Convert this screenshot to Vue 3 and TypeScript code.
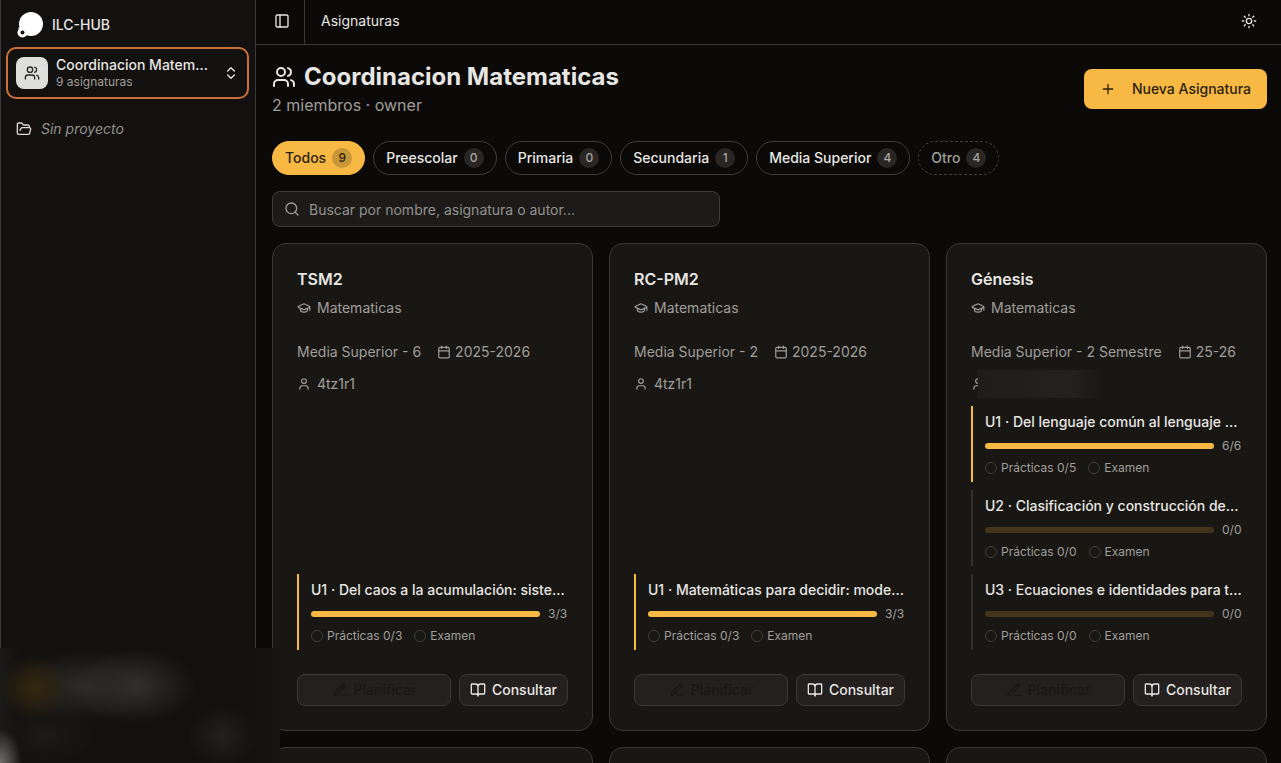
<script setup lang="ts">
import { ref } from 'vue'

interface Filter {
  label: string
  count: number
  dashed?: boolean
}
interface Unit {
  title: string
  done: number
  total: number
  practices: string
}
interface Subject {
  name: string
  area: string
  level: string
  period: string
  author: string
  units: Unit[]
}

const active = ref('Todos')
const query = ref('')

const filters: Filter[] = [
  { label: 'Todos', count: 9 },
  { label: 'Preescolar', count: 0 },
  { label: 'Primaria', count: 0 },
  { label: 'Secundaria', count: 1 },
  { label: 'Media Superior', count: 4 },
  { label: 'Otro', count: 4, dashed: true },
]

const subjects: Subject[] = [
  {
    name: 'TSM2',
    area: 'Matematicas',
    level: 'Media Superior - 6',
    period: '2025-2026',
    author: '4tz1r1',
    units: [{ title: 'U1 · Del caos a la acumulación: sistemas', done: 3, total: 3, practices: '0/3' }],
  },
  {
    name: 'RC-PM2',
    area: 'Matematicas',
    level: 'Media Superior - 2',
    period: '2025-2026',
    author: '4tz1r1',
    units: [{ title: 'U1 · Matemáticas para decidir: modelos', done: 3, total: 3, practices: '0/3' }],
  },
  {
    name: 'Génesis',
    area: 'Matematicas',
    level: 'Media Superior - 2 Semestre',
    period: '25-26',
    author: '',
    units: [
      { title: 'U1 · Del lenguaje común al lenguaje algebraico', done: 6, total: 6, practices: '0/5' },
      { title: 'U2 · Clasificación y construcción de triángulos', done: 0, total: 0, practices: '0/0' },
      { title: 'U3 · Ecuaciones e identidades para todos', done: 0, total: 0, practices: '0/0' },
    ],
  },
]

const percent = (u: Unit): number => (u.total ? (u.done / u.total) * 100 : 0)
</script>

<template>
  <div class="shell">
    <aside class="sidebar">
      <div class="brand">
        <svg class="logo" viewBox="0 0 28 28" aria-hidden="true">
          <circle cx="15" cy="13" r="12" fill="#fff" />
          <circle cx="6.5" cy="21.5" r="5" fill="#fff" />
          <circle cx="6.5" cy="21.5" r="2" fill="#12110f" />
          <path d="M1.8 17.5L3.6 15.8L4 18Z" fill="#fff" />
        </svg>
        <span>ILC-HUB</span>
      </div>
      <button class="switcher" type="button">
        <span class="tile">
          <svg class="icon s16" viewBox="0 0 24 24"><path d="M16 21v-2a4 4 0 0 0-4-4H6a4 4 0 0 0-4 4v2" /><circle cx="9" cy="7" r="4" /><path d="M22 21v-2a4 4 0 0 0-3-3.87M16 3.13a4 4 0 0 1 0 7.75" /></svg>
        </span>
        <span class="switch-text">
          <span class="switch-name">Coordinacion Matematicas</span>
          <span class="switch-sub">9 asignaturas</span>
        </span>
        <svg class="icon s16" viewBox="0 0 24 24"><path d="m7 15 5 5 5-5M7 9l5-5 5 5" /></svg>
      </button>
      <a class="project" href="#">
        <svg class="icon s16" viewBox="0 0 24 24"><path d="m6 14 1.5-2.9A2 2 0 0 1 9.24 10H20a2 2 0 0 1 1.94 2.5l-1.54 6a2 2 0 0 1-1.95 1.5H4a2 2 0 0 1-2-2V5a2 2 0 0 1 2-2h3.9a2 2 0 0 1 1.69.9l.81 1.2a2 2 0 0 0 1.67.9H18a2 2 0 0 1 2 2v2" /></svg>
        <em>Sin proyecto</em>
      </a>
    </aside>

    <div class="page">
      <header class="topbar">
        <button class="toggle" type="button" aria-label="Barra lateral">
          <svg class="icon s16" viewBox="0 0 24 24"><rect x="3" y="3" width="18" height="18" rx="2" /><path d="M9 3v18" /></svg>
        </button>
        <span class="crumb">Asignaturas</span>
        <button class="theme" type="button" aria-label="Tema">
          <svg class="icon s16" viewBox="0 0 24 24"><circle cx="12" cy="12" r="4" /><path d="M12 2v2M12 20v2M4.93 4.93l1.41 1.41M17.66 17.66l1.41 1.41M2 12h2M20 12h2M6.34 17.66l-1.41 1.41M19.07 4.93l-1.41 1.41" /></svg>
        </button>
      </header>

      <main class="content">
        <div class="heading">
          <div>
            <h1>
              <svg class="icon s24" viewBox="0 0 24 24"><path d="M16 21v-2a4 4 0 0 0-4-4H6a4 4 0 0 0-4 4v2" /><circle cx="9" cy="7" r="4" /><path d="M22 21v-2a4 4 0 0 0-3-3.87M16 3.13a4 4 0 0 1 0 7.75" /></svg>
              Coordinacion Matematicas
            </h1>
            <p>2 miembros · owner</p>
          </div>
          <button class="primary" type="button">
            <svg class="icon s16" viewBox="0 0 24 24"><path d="M5 12h14M12 5v14" /></svg>
            Nueva Asignatura
          </button>
        </div>

        <div class="filters">
          <button
            v-for="f in filters"
            :key="f.label"
            type="button"
            class="chip"
            :class="{ active: active === f.label, dashed: f.dashed }"
            @click="active = f.label"
          >
            {{ f.label }}<span class="count">{{ f.count }}</span>
          </button>
        </div>

        <label class="search">
          <svg class="icon s16" viewBox="0 0 24 24"><circle cx="11" cy="11" r="8" /><path d="m21 21-4.3-4.3" /></svg>
          <input v-model="query" type="text" aria-label="Buscar" placeholder="Buscar por nombre, asignatura o autor..." />
        </label>

        <div class="grid">
          <article v-for="s in subjects" :key="s.name" class="card">
            <h2>{{ s.name }}</h2>
            <div class="line area">
              <svg class="icon s14" viewBox="0 0 24 24"><path d="M21.42 10.92a1 1 0 0 0-.02-1.84L12.83 5.18a2 2 0 0 0-1.66 0L2.6 9.08a1 1 0 0 0 0 1.83l8.57 3.91a2 2 0 0 0 1.66 0zM22 10v6M6 12.5V16a6 3 0 0 0 12 0v-3.5" /></svg>
              {{ s.area }}
            </div>
            <div class="meta">
              <span>{{ s.level }}</span>
              <span class="line period">
                <svg class="icon s14" viewBox="0 0 24 24"><path d="M8 2v4M16 2v4M3 10h18" /><rect x="3" y="4" width="18" height="18" rx="2" /></svg>
                {{ s.period }}
              </span>
            </div>
            <div class="line author">
              <svg class="icon s14" viewBox="0 0 24 24"><path d="M19 21v-2a4 4 0 0 0-4-4H9a4 4 0 0 0-4 4v2" /><circle cx="12" cy="7" r="4" /></svg>
              <template v-if="s.author">{{ s.author }}</template>
              <span v-else class="veil"></span>
            </div>
            <div class="units">
              <section v-for="u in s.units" :key="u.title" class="unit" :class="{ started: u.done > 0 }">
                <h3>{{ u.title }}</h3>
                <div class="progress">
                  <div class="track"><div class="fill" :style="{ width: percent(u) + '%' }"></div></div>
                  <span>{{ u.done }}/{{ u.total }}</span>
                </div>
                <div class="checks">
                  <span><i></i>Prácticas {{ u.practices }}</span>
                  <span><i></i>Examen</span>
                </div>
              </section>
            </div>
            <div class="actions">
              <button class="plan" type="button" disabled>
                <svg class="icon s16" viewBox="0 0 24 24"><path d="M12 20h9M16.38 3.62a1 1 0 0 1 3 3L7.37 18.64a2 2 0 0 1-.86.5l-2.87.84a.5.5 0 0 1-.62-.62l.84-2.87a2 2 0 0 1 .5-.86zM15 5l3 3" /></svg>
                Planificar
              </button>
              <button class="consult" type="button">
                <svg class="icon s16" viewBox="0 0 24 24"><path d="M12 7v14M3 18a1 1 0 0 1-1-1V4a1 1 0 0 1 1-1h5a4 4 0 0 1 4 4 4 4 0 0 1 4-4h5a1 1 0 0 1 1 1v13a1 1 0 0 1-1 1h-6a3 3 0 0 0-3 3 3 3 0 0 0-3-3z" /></svg>
                Consultar
              </button>
            </div>
          </article>
          <article v-for="n in 3" :key="n" class="card"></article>
        </div>
      </main>
    </div>

    <div class="haze" aria-hidden="true"></div>
  </div>
</template>

<style>
body {
  margin: 0;
  background: #0b0a08;
}
</style>

<style scoped>
.shell {
  position: relative;
  display: flex;
  height: 100vh;
  overflow: hidden;
  background: #0b0a08;
  color: #e8e6e3;
  font: 14px/20px Inter, 'Liberation Sans', sans-serif;
}
.shell *,
.shell {
  box-sizing: border-box;
}
button,
input {
  font: inherit;
  color: inherit;
}
button {
  cursor: pointer;
}
h1, h2, h3, p {
  margin: 0;
}
.icon {
  flex: none;
  fill: none;
  stroke: currentColor;
  stroke-width: 2;
  stroke-linecap: round;
  stroke-linejoin: round;
}
.s14 { width: 14px; height: 14px; }
.s16 { width: 16px; height: 16px; }
.s24 { width: 24px; height: 24px; }

.sidebar {
  flex: none;
  width: 256px;
  padding: 8px 6px;
  background: #12110f;
  border: solid #3a3937;
  border-width: 0 1px;
}
.brand {
  display: flex;
  align-items: center;
  gap: 8px;
  height: 34px;
  padding-left: 9px;
  font-weight: 500;
}
.logo {
  width: 28px;
  height: 28px;
}
.switcher {
  display: flex;
  align-items: center;
  gap: 8px;
  width: 243px;
  height: 52px;
  margin: 5px 0 0 -1px;
  padding: 0 8px;
  background: none;
  border: 2px solid #cb6f3b;
  border-radius: 10px;
  text-align: left;
}
.tile {
  display: grid;
  place-items: center;
  width: 32px;
  height: 32px;
  border-radius: 8px;
  background: #dededc;
  color: #2b2927;
}
.switch-text {
  flex: 1;
  min-width: 0;
  display: grid;
}
.switch-name {
  overflow: hidden;
  text-overflow: ellipsis;
  white-space: nowrap;
  font-weight: 500;
  line-height: 18px;
}
.switch-sub {
  font-size: 12px;
  line-height: 16px;
  color: #a09e9a;
}
.project {
  display: flex;
  align-items: center;
  gap: 9px;
  margin-top: 20px;
  padding-left: 9px;
  color: #dddbd8;
  text-decoration: none;
}
.project em {
  color: #94918d;
}

.page {
  flex: 1;
  min-width: 0;
}
.topbar {
  display: flex;
  align-items: center;
  height: 45px;
  padding-right: 24px;
  border-bottom: 1px solid #3a3937;
}
.toggle {
  display: grid;
  place-items: center;
  align-self: stretch;
  width: 49px;
  padding: 0 0 2px 3px;
  background: none;
  border: 0;
  border-right: 1px solid #3a3937;
}
.crumb {
  flex: 1;
  padding: 0 0 2px 16px;
}
.theme {
  display: grid;
  padding: 0 0 2px;
  background: none;
  border: 0;
}
.content {
  padding: 16px 14px 0 16px;
}
.heading {
  display: flex;
  align-items: center;
  justify-content: space-between;
  height: 56px;
}
h1 {
  display: flex;
  align-items: center;
  gap: 8px;
  font-size: 24px;
  line-height: 32px;
  font-weight: 700;
}
.heading p {
  font-size: 16px;
  line-height: 24px;
  color: #a09e9a;
}
.primary {
  display: flex;
  align-items: center;
  gap: 16px;
  height: 40px;
  padding: 0 16px;
  background: #f7b944;
  border: 0;
  border-radius: 8px;
  color: #2a210f;
  font-weight: 500;
}
.filters {
  display: flex;
  gap: 8px;
  margin-top: 24px;
}
.chip {
  display: flex;
  align-items: center;
  gap: 6px;
  height: 34px;
  padding: 0 12px;
  background: none;
  border: 1px solid #3f3d3b;
  border-radius: 17px;
  font-weight: 500;
}
.count {
  min-width: 20px;
  border-radius: 10px;
  background: #292624;
  color: #a8a5a1;
  font-size: 12px;
  line-height: 20px;
}
.chip.active {
  background: #f7b944;
  border-color: #f7b944;
  color: #2a210f;
}
.chip.active .count {
  background: #c99738;
  color: #2a210f;
}
.chip.dashed {
  border-style: dashed;
  color: #a09e9a;
}
.search {
  display: flex;
  align-items: center;
  gap: 9px;
  max-width: 448px;
  height: 36px;
  margin: 16px 0;
  padding: 0 11px;
  background: #1c1b19;
  border: 1px solid #3f3d3b;
  border-radius: 8px;
  color: #a09e9a;
}
.search input {
  flex: 1;
  min-width: 0;
  padding: 2px 0 0;
  background: none;
  border: 0;
  outline: 0;
}
.search input::placeholder {
  color: #94918d;
  opacity: 1;
}
.grid {
  display: grid;
  grid-template-columns: repeat(3, minmax(0, 1fr));
  gap: 16px;
}
.card {
  display: flex;
  flex-direction: column;
  min-height: 160px;
  padding: 24px;
  background: #181714;
  border: 1px solid #3a3937;
  border-radius: 14px;
  color: #a09e9a;
}
h2 {
  color: #e8e6e3;
  font-size: 16px;
  line-height: 22px;
  font-weight: 600;
}
.line {
  display: flex;
  align-items: center;
  gap: 6px;
}
.area {
  margin-top: 8px;
}
.meta {
  display: flex;
  gap: 16px;
  margin-top: 24px;
  white-space: nowrap;
}
.period {
  gap: 4px;
}
.author {
  position: relative;
  height: 20px;
  margin-top: 12px;
}
.veil {
  position: absolute;
  left: 7px;
  top: -4px;
  width: 125px;
  height: 28px;
  background: linear-gradient(90deg, #1f1d1b, #242120 75%, #181714);
}
.units {
  display: grid;
  gap: 8px;
  margin-top: auto;
  padding-top: 12px;
}
.unit {
  display: grid;
  gap: 6px;
  min-width: 0;
  padding: 6px 0 6px 12px;
  border-left: 2px solid #33312f;
}
.unit.started {
  border-color: #f7b944;
}
h3 {
  overflow: hidden;
  text-overflow: ellipsis;
  white-space: nowrap;
  color: #e8e6e3;
  font-size: 14px;
  line-height: 20px;
  font-weight: 500;
}
.progress {
  display: flex;
  align-items: center;
  gap: 8px;
  font-size: 12px;
  line-height: 16px;
}
.progress span {
  min-width: 20px;
}
.track {
  flex: 1;
  height: 6px;
  overflow: hidden;
  background: #44351a;
  border-radius: 3px;
}
.fill {
  height: 100%;
  background: #f7b944;
}
.checks {
  display: flex;
  gap: 12px;
  font-size: 12px;
  line-height: 16px;
}
.checks span {
  display: flex;
  align-items: center;
  gap: 4px;
}
.checks i {
  width: 12px;
  height: 12px;
  border: 1px solid #3f3d3b;
  border-radius: 50%;
}
.actions {
  display: flex;
  gap: 8px;
  margin-top: 24px;
}
.actions button {
  display: flex;
  align-items: center;
  justify-content: center;
  gap: 6px;
  height: 32px;
  padding: 0 10px;
  background: #23201f;
  border: 1px solid #3a3937;
  border-radius: 8px;
  color: #e8e6e3;
  font-weight: 500;
}
.actions .plan {
  flex: 1;
  color: #191816;
}
.haze {
  position: absolute;
  left: 0;
  bottom: 0;
  width: 280px;
  height: 115px;
  background:
    radial-gradient(ellipse 22px 34px at 0 115px, #706e6c, #706e6c00),
    radial-gradient(ellipse 34px 34px at 34px 40px, #35270f, #35270f00),
    radial-gradient(ellipse 70px 36px at 84px 38px, #2e2c2a, #2e2c2a00),
    radial-gradient(ellipse 60px 38px at 136px 38px, #32302d, #32302d00),
    radial-gradient(ellipse 34px 30px at 222px 88px, #22211f, #22211f00),
    radial-gradient(ellipse 50px 30px at 46px 88px, #1b1a17, #1b1a1700),
    linear-gradient(90deg, #1b1a18, #12110f 20px, #12110f 245px, #151411);
}
</style>
